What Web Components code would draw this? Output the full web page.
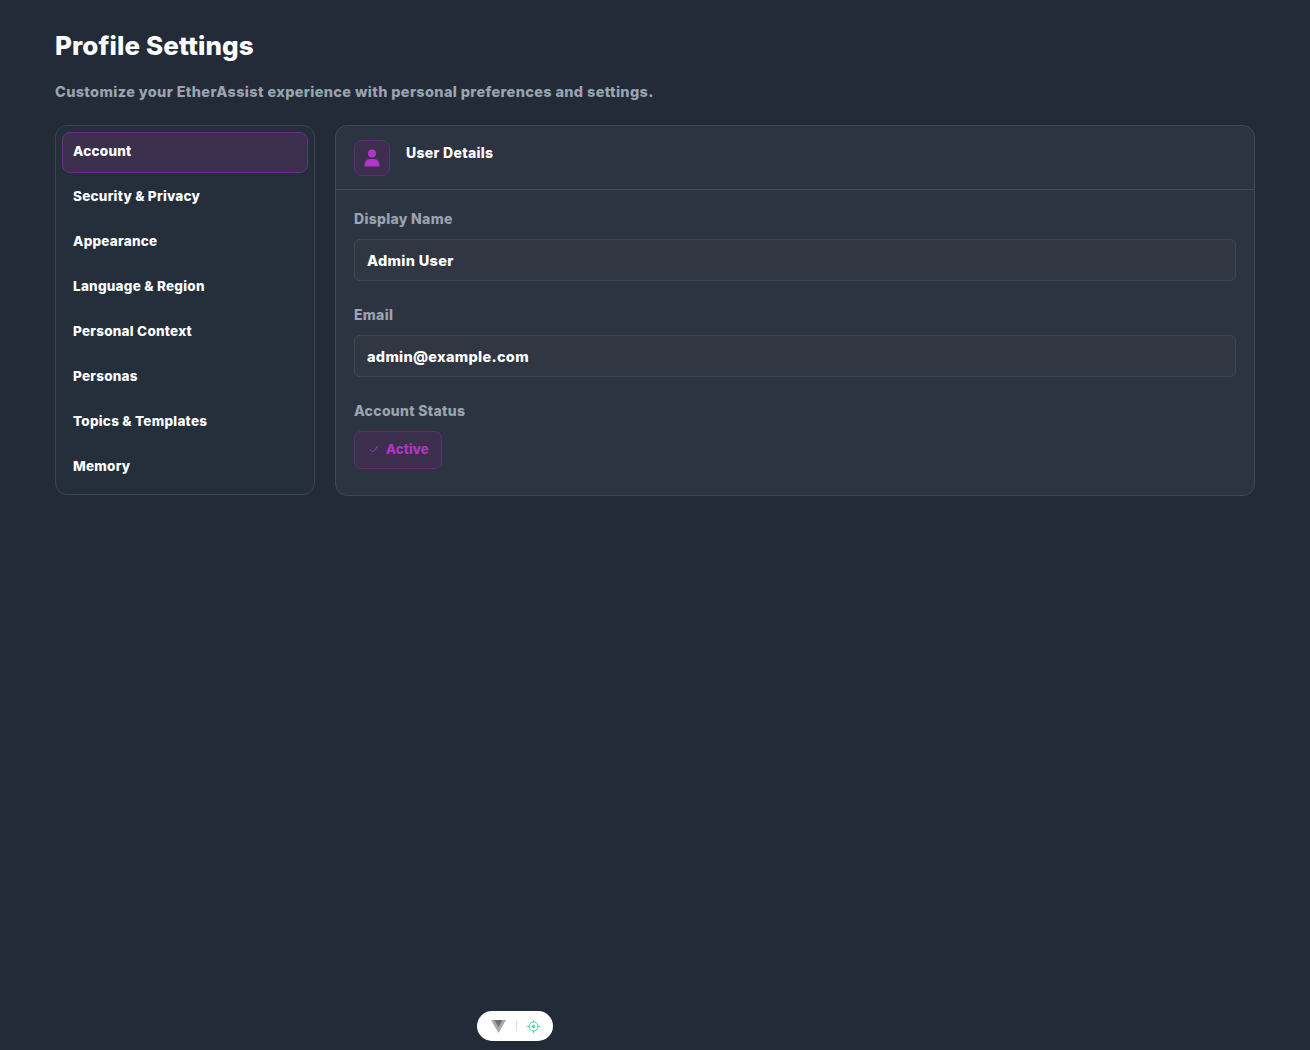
<!DOCTYPE html>
<html>
<head>
<meta charset="utf-8">
<title>Profile Settings</title>
<style>
  html, body { margin: 0; height: 100%; }
  body {
    background: #222b37;
    color: #fff;
    font-family: 'Inter', 'Liberation Sans', sans-serif;
    font-weight: 700;
  }
</style>
</head>
<body>
<settings-page>
  <side-nav slot="nav">
    <nav-item active>Account</nav-item>
    <nav-item>Security &amp; Privacy</nav-item>
    <nav-item>Appearance</nav-item>
    <nav-item>Language &amp; Region</nav-item>
    <nav-item>Personal Context</nav-item>
    <nav-item>Personas</nav-item>
    <nav-item>Topics &amp; Templates</nav-item>
    <nav-item>Memory</nav-item>
  </side-nav>
  <details-card slot="main">
    <form-field label="Display Name" value="Admin User"></form-field>
    <form-field label="Email" value="admin@example.com"></form-field>
    <status-field label="Account Status">Active</status-field>
  </details-card>
</settings-page>
<dev-pill></dev-pill>

<script>
class SettingsPage extends HTMLElement {
  constructor() {
    super();
    this.attachShadow({ mode: 'open' }).innerHTML = `
      <style>
        :host { display: block; padding: 30px 55px 0; }
        h1 { margin: 0; font-size: 26px; line-height: 32px; font-weight: 800; color: #fff; letter-spacing: .1px; }
        p { margin: 18px 0 0; font-size: 14.5px; line-height: 24px; font-weight: 800; color: #9aa3af; letter-spacing: .35px; }
        .cols { display: grid; grid-template-columns: 260px 920px; gap: 20px; margin-top: 21px; align-items: start; }
      </style>
      <h1>Profile Settings</h1>
      <p>Customize your EtherAssist experience with personal preferences and settings.</p>
      <div class="cols">
        <slot name="nav"></slot>
        <slot name="main"></slot>
      </div>`;
  }
}

class SideNav extends HTMLElement {
  constructor() {
    super();
    this.attachShadow({ mode: 'open' }).innerHTML = `
      <style>
        :host { display: flex; flex-direction: column; gap: 4px; box-sizing: border-box; height: 370px; padding: 6px; background: #252f3c; border: 1px solid #3b4552; border-radius: 12px; }
      </style>
      <slot></slot>`;
  }
}

class NavItem extends HTMLElement {
  constructor() {
    super();
    this.attachShadow({ mode: 'open' }).innerHTML = `
      <style>
        :host { display: flex; align-items: center; box-sizing: border-box; height: 41px; padding: 0 10px 3px; border: 1px solid transparent; border-radius: 8px; font-size: 13.5px; font-weight: 800; color: #fff; letter-spacing: .25px; }
        :host([active]) { background: #3c2f4e; border-color: #6b2e85; }
      </style>
      <slot></slot>`;
  }
}

class DetailsCard extends HTMLElement {
  constructor() {
    super();
    this.attachShadow({ mode: 'open' }).innerHTML = `
      <style>
        :host { display: block; box-sizing: border-box; height: 371px; background: #2c3442; border: 1px solid #3f4855; border-radius: 12px; }
        header { display: flex; gap: 16px; height: 64px; box-sizing: border-box; padding: 14px 18px 0; border-bottom: 1px solid #3f4855; }
        .icon { display: flex; align-items: center; justify-content: center; box-sizing: border-box; width: 36px; height: 36px; background: #3c2f4e; border: 1px solid #5c2e73; border-radius: 8px; }
        h2 { margin: 0; font-size: 14px; line-height: 26px; font-weight: 800; color: #fff; letter-spacing: .3px; }
        .body { display: flex; flex-direction: column; gap: 23px; padding: 18px 18px 0; }
      </style>
      <header>
        <div class="icon">
          <svg width="16" height="18" viewBox="0 0 16 18"><circle cx="8" cy="4.5" r="4" fill="#b235c6"/><path d="M0.6 17.5V15a6 6 0 0 1 6-5h2.800a6 6 0 0 1 6 5v2.500z" fill="#b235c6"/></svg>
        </div>
        <h2>User Details</h2>
      </header>
      <div class="body"><slot></slot></div>`;
  }
}

class FormField extends HTMLElement {
  constructor() {
    super();
    this.attachShadow({ mode: 'open' }).innerHTML = `
      <style>
        :host { display: block; }
        label { display: block; font-size: 14px; line-height: 22px; font-weight: 800; color: #9aa3af; letter-spacing: .3px; }
        .input { display: flex; align-items: center; box-sizing: border-box; height: 42px; margin-top: 9px; padding: 0 12px; background: #303642; border: 1px solid #3f4855; border-radius: 6px; font-size: 14.5px; font-weight: 800; color: #fff; letter-spacing: .3px; }
      </style>
      <label></label>
      <div class="input"></div>`;
    this.shadowRoot.querySelector('label').textContent = this.getAttribute('label');
    this.shadowRoot.querySelector('.input').textContent = this.getAttribute('value');
  }
}

class StatusField extends HTMLElement {
  constructor() {
    super();
    this.attachShadow({ mode: 'open' }).innerHTML = `
      <style>
        :host { display: block; }
        label { display: block; font-size: 14px; line-height: 22px; font-weight: 800; color: #9aa3af; letter-spacing: .3px; }
        .badge { display: inline-flex; align-items: center; gap: 7px; box-sizing: border-box; height: 38px; margin-top: 9px; padding: 0 12px 2px 14px; background: #3c2f4e; border: 1px solid #5c2e73; border-radius: 7px; font-size: 13px; font-weight: 800; color: #b235c6; letter-spacing: .2px; }
      </style>
      <label></label>
      <div class="badge">
        <svg width="10" height="10" viewBox="0 0 10 10" fill="none" stroke="#b235c6" stroke-width="1"><path d="M1 5.500 3.800 8 9 2"/></svg>
        <slot></slot>
      </div>`;
    this.shadowRoot.querySelector('label').textContent = this.getAttribute('label');
  }
}

// vue devtools pill, sits over the page
class DevPill extends HTMLElement {
  constructor() {
    super();
    this.attachShadow({ mode: 'open' }).innerHTML = `
      <style>
        :host { position: fixed; left: 477px; top: 1011px; display: flex; align-items: center; justify-content: center; gap: 10px; box-sizing: border-box; width: 76px; height: 30px; background: #fff; border-radius: 15px; }
        i { width: 1px; height: 10px; background: #ddd; }
      </style>
      <svg width="15" height="13" viewBox="0 0 15 13"><path d="M0 0h15L7.500 13z" fill="#a8a8a8"/><path d="M3.500 0h8L7.500 7z" fill="#6e6e6e"/></svg>
      <i></i>
      <svg width="13" height="13" viewBox="0 0 13 13" fill="none" stroke="#3ddc97" stroke-width="1"><circle cx="6.500" cy="6.500" r="4.500"/><circle cx="6.500" cy="6.500" r="1.200" fill="#3ddc97"/><path d="M6.500 0v2.500M6.500 10.500V13M0 6.500h2.500M10.500 6.500H13"/></svg>`;
  }
}

customElements.define('settings-page', SettingsPage);
customElements.define('side-nav', SideNav);
customElements.define('nav-item', NavItem);
customElements.define('details-card', DetailsCard);
customElements.define('form-field', FormField);
customElements.define('status-field', StatusField);
customElements.define('dev-pill', DevPill);
</script>
</body>
</html>
